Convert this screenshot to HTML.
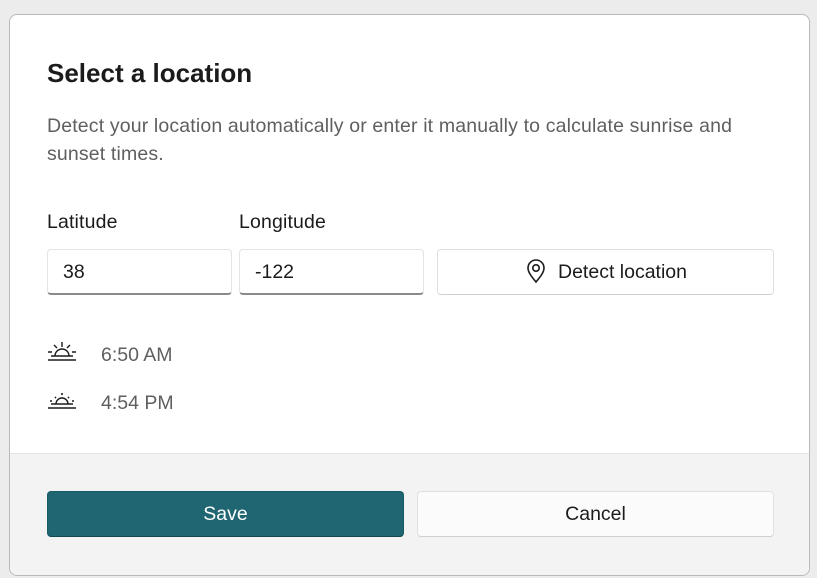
<!DOCTYPE html>
<html><head><style>
body{margin:0;width:817px;height:578px;background:#ececec;font-family:"Liberation Sans",sans-serif;overflow:hidden;position:relative}
.dlg{position:absolute;left:9px;top:14px;width:801px;height:562px;background:#fff;border:1px solid #b9b9b9;border-radius:8px;overflow:hidden;box-sizing:border-box}
.t{position:absolute;left:37px;top:43px;font-size:26px;font-weight:bold;color:#1b1b1b}
.d{position:absolute;left:37px;top:97px;width:740px;font-size:19.5px;letter-spacing:0.15px;line-height:28px;color:#5f5f5f}
.l{position:absolute;top:196px;font-size:19.5px;letter-spacing:0.15px;color:#1b1b1b}
.in{position:absolute;top:234px;height:46px;box-sizing:border-box;border:1px solid #e3e3e3;border-bottom:2px solid #8a8a8a;border-radius:4px;background:#fff;font-size:19.5px;color:#1b1b1b;padding:11px 0 0 15px}
.btn{position:absolute;box-sizing:border-box;border:1px solid #e0e0e0;border-bottom-color:#cfcfcf;border-radius:4px;background:#fbfbfb;font-size:19.5px;color:#1b1b1b;text-align:center}
.row{position:absolute;left:37px;font-size:19.5px;color:#5f5f5f}
.row svg{position:absolute;left:0;top:-4px}
.row span{position:absolute;left:54px;top:0;white-space:nowrap}
.ft{position:absolute;left:0;top:438px;width:100%;height:130px;background:#f3f3f3;border-top:1px solid #e5e5e5}
</style></head><body>
<div class="dlg">
<div class="t">Select a location</div>
<div class="d">Detect your location automatically or enter it manually to calculate sunrise and sunset times.</div>
<div class="l" style="left:37px">Latitude</div>
<div class="l" style="left:229px">Longitude</div>
<div class="in" style="left:37px;width:185px">38</div>
<div class="in" style="left:229px;width:185px">-122</div>
<div class="btn" style="left:427px;top:234px;width:337px;height:46px;line-height:44px;background:#fff">
<svg width="24" height="26" viewBox="0 0 24 26" style="vertical-align:-6px;margin-right:10px"><path d="M12 24C7 18 4 14 4 10a8 8 0 0 1 16 0c0 4-3 8-8 14z" fill="none" stroke="#1b1b1b" stroke-width="1.6"/><circle cx="12" cy="10" r="3.2" fill="none" stroke="#1b1b1b" stroke-width="1.6"/></svg>Detect location</div>
<div class="row" style="top:329px"><svg width="30" height="22" viewBox="0 0 30 22"><path d="M1 20H29M4 16H26M8 16a7 7 0 0 1 14 0M15 2v5M7 5l3 3M23 5l-3 3M1 12h4M25 12h4" stroke="#1b1b1b" stroke-width="1.4" fill="none"/></svg><span>6:50 AM</span></div>
<div class="row" style="top:377px"><svg width="30" height="22" viewBox="0 0 30 22"><path d="M1 20H29M4 16H26M9 16a6 6 0 0 1 12 0" stroke="#1b1b1b" stroke-width="1.4" fill="none"/><path d="M15 5v2M8 9l1 1M22 9l-1 1M3 13h2M25 13h2" stroke="#1b1b1b" stroke-width="1.6"/></svg><span>4:54 PM</span></div>
<div class="ft"></div>
<div class="btn" style="left:37px;top:476px;width:357px;height:46px;line-height:44px;background:#1f6672;border:1px solid #1a5a64;border-bottom-color:#124850;color:#fff">Save</div>
<div class="btn" style="left:407px;top:476px;width:357px;height:46px;line-height:44px">Cancel</div>
</div>
</body></html>
